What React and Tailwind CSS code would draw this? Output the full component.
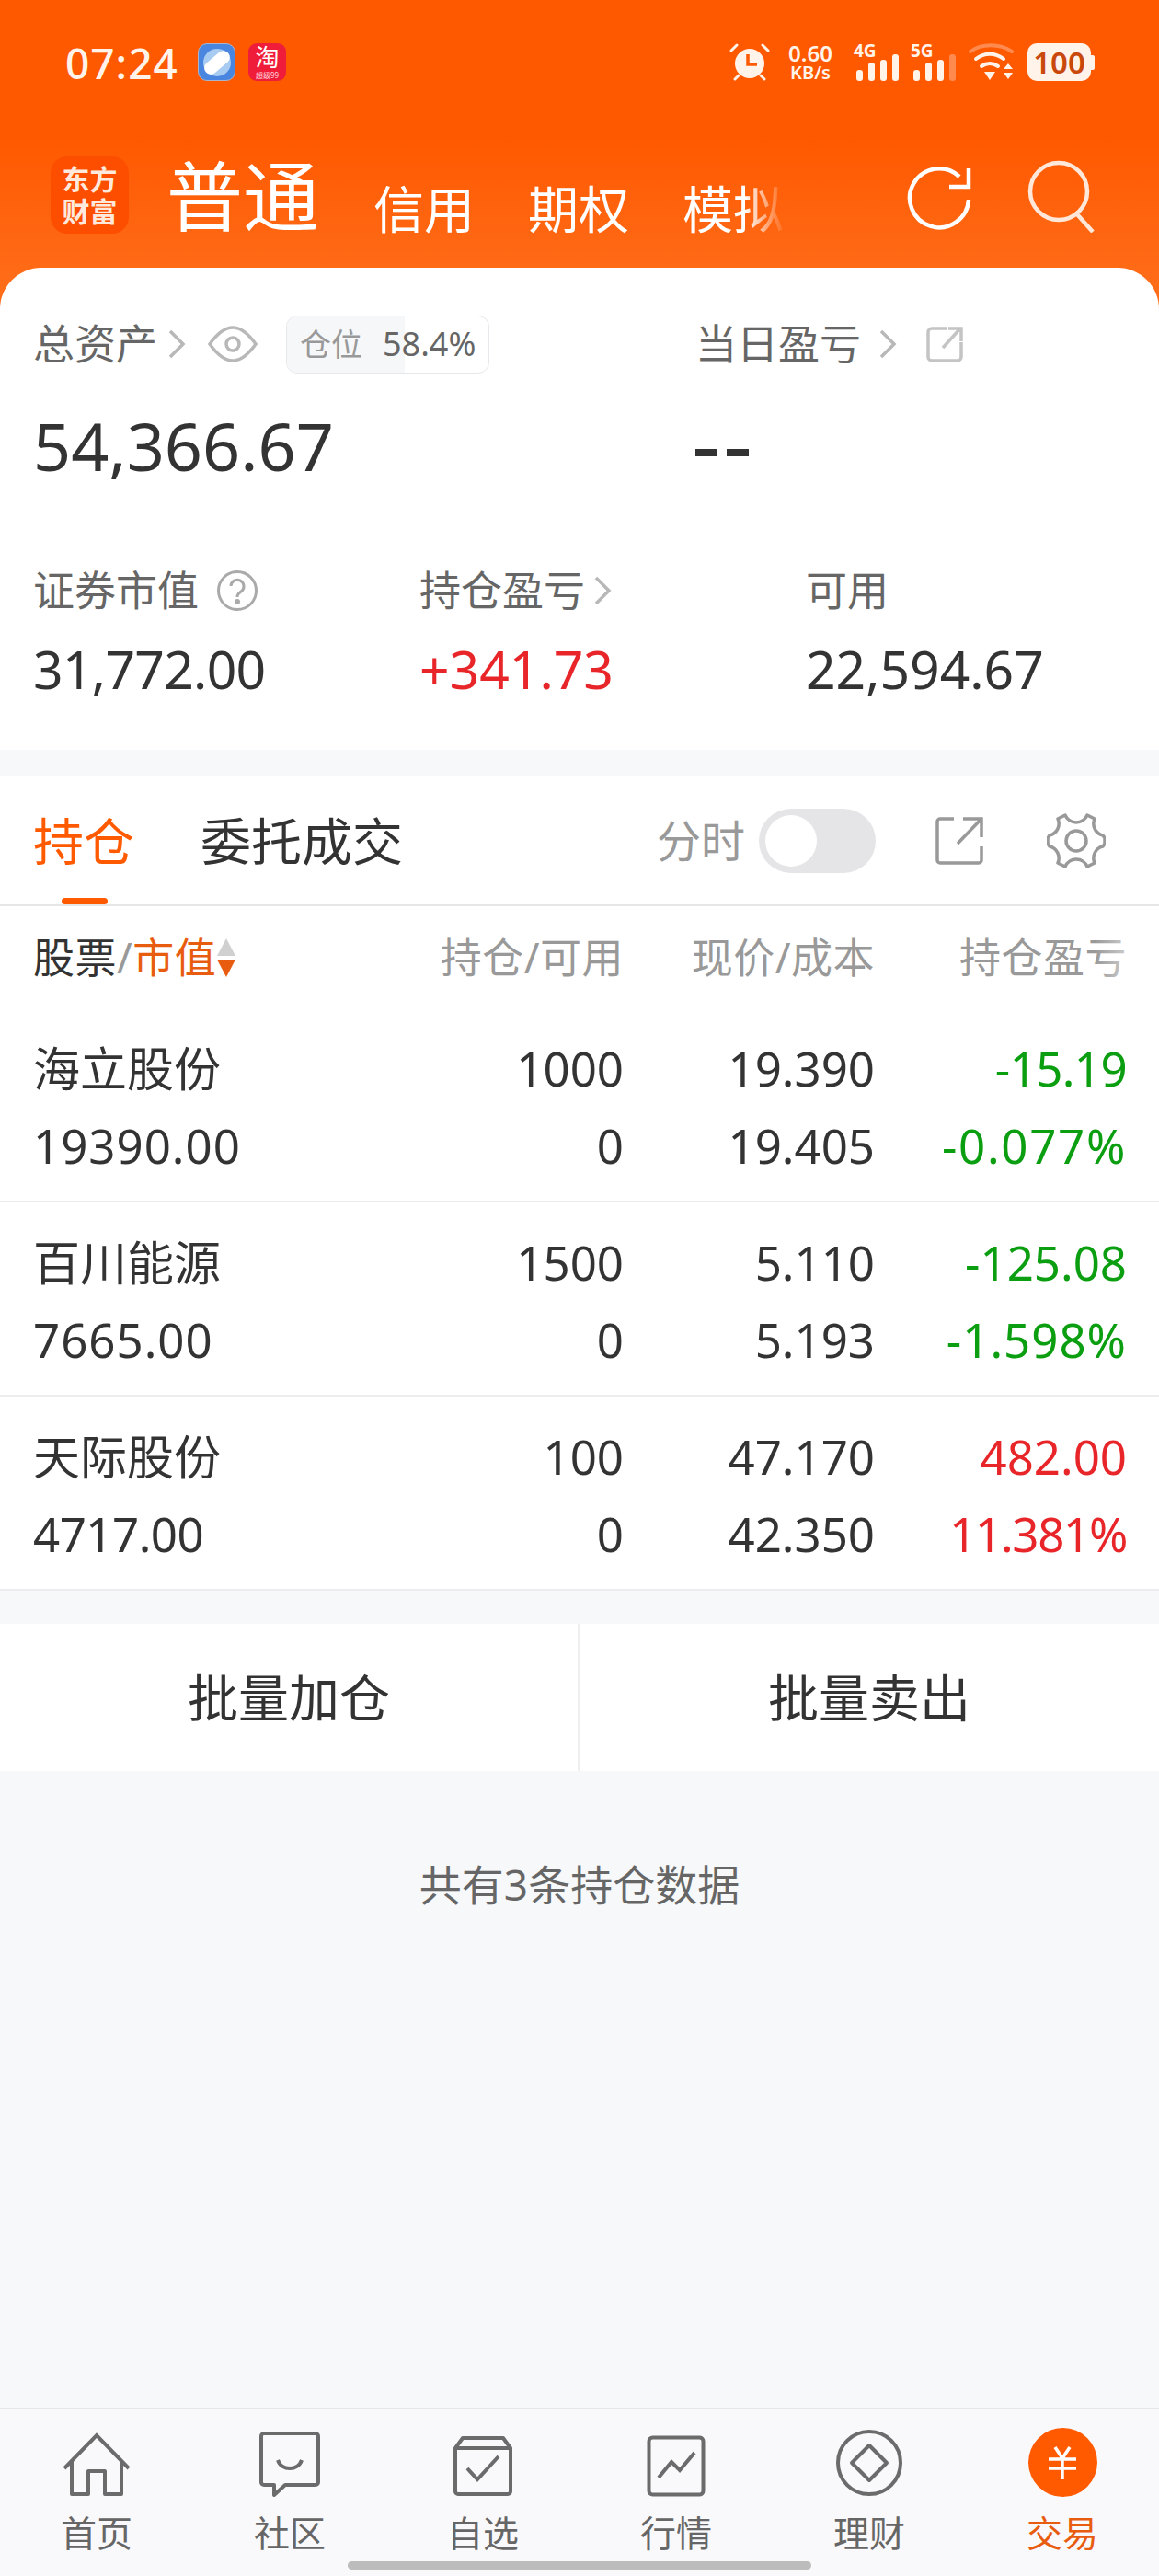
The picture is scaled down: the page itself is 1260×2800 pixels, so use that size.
import React from "react";

const FF = { fontFamily: '"Noto Sans","Noto Sans CJK SC",sans-serif' };

function Bars({ dim }) {
  const hs = ["h-[12px]", "h-[20px]", "h-[23px]", "h-[29px]"];
  return (
    <div className="flex items-end gap-[6px]">
      {hs.map((h, i) => (
        <div key={i} className={`w-[7px] rounded-[3px] ${h} ${dim && i === 3 ? "bg-[#ff8a4f]" : "bg-[#fff3ea]"}`} />
      ))}
    </div>
  );
}

function Alarm() {
  return (
    <svg width="44" height="41" viewBox="0 0 44 41" fill="none">
      <circle cx="22" cy="22" r="16" fill="#fff3ea" />
      <path d="M20 12v11h10" stroke="#ff5a00" strokeWidth="3.5" fill="none" />
      <path d="M2 8l6-6M42 8l-6-6M6 39l4-4M38 39l-4-4" stroke="#fff3ea" strokeWidth="3" strokeLinecap="round" />
    </svg>
  );
}

function Wifi() {
  return (
    <svg width="50" height="41" viewBox="0 0 50 41" fill="none">
      <path d="M2 9C14 0 34 0 47 9" stroke="#ff8a4f" strokeWidth="4" strokeLinecap="round" />
      <path d="M8 17C17 10 29 10 38 17" stroke="#fff3ea" strokeWidth="4" strokeLinecap="round" />
      <path d="M14 25C20 21 26 21 32 25" stroke="#fff3ea" strokeWidth="4" strokeLinecap="round" />
      <path d="M17 31h12l-6 9z" fill="#fff3ea" />
      <path d="M38 28l5-6 5 6zM38 32h10l-5 7z" fill="#fff3ea" />
    </svg>
  );
}

function StatusBar() {
  return (
    <div className="flex h-[41px] items-center justify-between pl-[71px] pr-[70px] text-[#fff3ea]">
      <div className="flex items-center">
        <span className="w-[124px] text-[46px] leading-none font-medium tracking-[1px]">07:24</span>
        <div className="relative ml-[20px] flex h-[41px] w-[41px] items-center justify-center overflow-hidden rounded-[10px] border border-[#a9b4c9] bg-[#4a86e0]">
          <div className="h-[30px] w-[30px] rounded-full bg-[#a8cbf2]" />
          <div className="absolute h-[14px] w-[32px] -rotate-40 rounded-full bg-white" />
        </div>
        <div className="ml-[14px] flex h-[41px] w-[41px] flex-col items-center overflow-hidden rounded-[9px] bg-[#ef1d3a] text-white">
          <span className="h-[30px] text-[26px] leading-[30px]">淘</span>
          <span className="h-[11px] text-[8px] leading-[10px] text-[#ffd6dc]">超级99</span>
        </div>
      </div>
      <div className="flex items-center">
        <Alarm />
        <div className="ml-[17px] flex w-[54px] flex-col items-center font-semibold">
          <span className="text-[24px] leading-[23px]">0.60</span>
          <span className="text-[20px] leading-[20px]">KB/s</span>
        </div>
        <div className="relative ml-[20px] flex h-[41px] w-[49px] items-end justify-end">
          <span className="absolute left-0 top-0 text-[19px] leading-[16px] font-bold">4G</span>
          <Bars />
        </div>
        <div className="relative ml-[13px] flex h-[41px] w-[49px] items-end justify-end">
          <span className="absolute left-0 top-0 text-[19px] leading-[16px] font-bold">5G</span>
          <Bars dim />
        </div>
        <div className="ml-[14px]"><Wifi /></div>
        <div className="ml-[14px] flex items-center">
          <div className="flex h-[41px] w-[69px] items-center justify-center rounded-[10px] bg-[#fff3ea] text-[33px] font-semibold text-[#c9480c]">100</div>
          <div className="h-[16px] w-[4px] rounded-r-[2px] bg-[#fff3ea]" />
        </div>
      </div>
    </div>
  );
}

function Header() {
  return (
    <div className="bg-gradient-to-b from-[#ff5900] from-[45%] to-[#ff6f1a] pb-[72px] pt-[47px]">
      <StatusBar />
      <div className="mt-[74px] flex h-[102px] items-end pl-[55px]">
        <div className="mb-[10px] flex h-[84px] w-[85px] flex-col items-center justify-center rounded-[18px] bg-[#fd4e00] text-[30px] leading-[35px] font-semibold text-[#ffe9dc]">
          <span className="h-[35px]">东方</span>
          <span className="h-[35px]">财富</span>
        </div>
        <span className="mb-[6px] ml-[41px] text-[83px] leading-[90px] text-white">普通</span>
        <div className="mb-[4px] ml-[59px] flex gap-[58px] text-[55px] leading-[66px] text-white [mask-image:linear-gradient(to_right,black_90%,transparent)]">
          <span>信用</span>
          <span>期权</span>
          <span className="w-[112px] whitespace-nowrap">模拟</span>
        </div>
        <div className="mb-[5px] ml-auto mr-[68px] flex items-center gap-[56px] text-white">
          <svg width="78" height="78" viewBox="0 0 78 78" fill="none" stroke="#fff" strokeWidth="4.5">
            <path d="M71 40a32 32 0 1 1-10-25" />
            <path d="M71 6v20H50" strokeLinejoin="miter" />
          </svg>
          <svg className="mb-[6px]" width="76" height="80" viewBox="0 0 76 80" fill="none" stroke="#ffe7d9" strokeWidth="4.5">
            <circle cx="35" cy="35" r="31" />
            <path d="M55 60l17 19" />
          </svg>
        </div>
      </div>
    </div>
  );
}

function Chevron() {
  return (
    <svg width="22" height="36" viewBox="0 0 22 36" fill="none" stroke="#b8b8b8" strokeWidth="3.5">
      <path d="M3 4l14 14L3 32" />
    </svg>
  );
}

function Summary() {
  return (
    <div className="relative z-10 -mt-[45px] rounded-t-[45px] bg-white pb-[46px] pt-[52px]">
      <div className="flex">
        <div className="w-[756px] pl-[36px]">
          <div className="flex h-[62px] items-center">
            <span className="text-[45px] leading-[62px] text-[#666]">总资产</span>
            <span className="ml-[11px]"><Chevron /></span>
            <svg className="ml-[22px]" width="54" height="42" viewBox="0 0 54 42" fill="none" stroke="#b8b8b8" strokeWidth="3.5">
              <path d="M2 21C12 7 20 3 27 3s15 4 25 18C42 35 34 39 27 39S12 35 2 21z" />
              <circle cx="27" cy="21" r="7" />
            </svg>
            <div className="relative ml-[31px] flex h-[63px] w-[221px] items-center overflow-hidden rounded-[12px] border border-[#e6e7ea] bg-white">
              <div className="absolute inset-y-0 left-0 w-[128px] bg-[#f6f7f9]" />
              <span className="relative ml-[14px] whitespace-nowrap text-[34px] text-[#999]">仓位</span>
              <span className="relative ml-[22px] whitespace-nowrap text-[36px] text-[#666]">58.4%</span>
            </div>
          </div>
          <div className="mt-[31px] text-[72px] leading-[96px] text-[#333]">54,366.67</div>
        </div>
        <div>
          <div className="flex h-[62px] items-center">
            <span className="text-[45px] leading-[62px] text-[#666]">当日盈亏</span>
            <span className="ml-[19px]"><Chevron /></span>
            <svg className="ml-[30px]" width="40" height="40" viewBox="0 0 40 40" fill="none" stroke="#c4c4c4" strokeWidth="3.5">
              <path d="M22 3H6a4 4 0 0 0-4 4v27a4 4 0 0 0 4 4h28a4 4 0 0 0 4-4V18" />
              <path d="M18 24L37 3M24 3h14v14" />
            </svg>
          </div>
          <div className="mt-[31px] text-[72px] leading-[96px] font-bold text-[#333]">
            <span className="inline-block h-[8px] w-[24px] bg-[#333] align-middle" />
            <span className="ml-[10px] inline-block h-[8px] w-[24px] bg-[#333] align-middle" />
          </div>
        </div>
      </div>
      <div className="mt-[79px] grid grid-cols-[420px_420px_1fr] pl-[36px]">
        <div>
          <div className="flex h-[62px] items-center">
            <span className="text-[45px] leading-[62px] text-[#666]">证券市值</span>
            <svg className="ml-[19px]" width="46" height="46" viewBox="0 0 46 46" fill="none" stroke="#aaa" strokeWidth="3">
              <circle cx="23" cy="23" r="20.5" />
              <path d="M16 18a7 7 0 1 1 11 6c-3 2-4 3-4 6" />
              <circle cx="23" cy="35" r="1.5" fill="#aaa" />
            </svg>
          </div>
          <div className="mt-[12px] text-[57px] leading-[84px] tracking-[-0.7px] text-[#333]">31,772.00</div>
        </div>
        <div>
          <div className="flex h-[62px] items-center">
            <span className="text-[45px] leading-[62px] text-[#666]">持仓盈亏</span>
            <span className="ml-[9px]"><Chevron /></span>
          </div>
          <div className="mt-[12px] text-[57px] leading-[84px] text-[#e8262a]">+341.73</div>
        </div>
        <div>
          <div className="flex h-[62px] items-center text-[45px] leading-[62px] text-[#666]">可用</div>
          <div className="mt-[12px] text-[57px] leading-[84px] text-[#333]">22,594.67</div>
        </div>
      </div>
    </div>
  );
}

function Tabs() {
  return (
    <div className="relative mt-[29px] flex h-[141px] items-center border-b-[2px] border-[#e6e6e6] bg-white pl-[36px] pr-[58px]">
      <span className="text-[55px] leading-[70px] text-[#ff5a00]">持仓</span>
      <span className="ml-[72px] text-[55px] leading-[70px] text-[#333]">委托成交</span>
      <div className="absolute bottom-0 left-[67px] h-[7px] w-[50px] rounded-full bg-[#ff5a00]" />
      <span className="ml-auto text-[48px] leading-[60px] text-[#999]">分时</span>
      <div className="ml-[15px] flex h-[70px] w-[127px] items-center rounded-full bg-[#e5e5e7] pl-[7px]">
        <div className="h-[56px] w-[56px] rounded-full bg-white" />
      </div>
      <svg className="ml-[65px]" width="52" height="52" viewBox="0 0 52 52" fill="none" stroke="#999" strokeWidth="3.5">
        <path d="M20 2H5a3 3 0 0 0-3 3v42a3 3 0 0 0 3 3h42a3 3 0 0 0 3-3V32" />
        <path d="M30 2h20v20M50 2L24 29" />
      </svg>
      <svg className="ml-[69px]" width="64" height="62" viewBox="0 0 64 62" fill="none" stroke="#999" strokeWidth="3.5" strokeLinejoin="round">
        <path d="M20 3a13 13 0 0 0 24 0l8 4a13 13 0 0 0 9 18l2 3v6l-2 3a13 13 0 0 0-9 18l-8 4a13 13 0 0 0-24 0l-8-4a13 13 0 0 0-9-18l-2-3v-6l2-3a13 13 0 0 0 9-18z" />
        <circle cx="32" cy="31" r="11" />
      </svg>
    </div>
  );
}

const G = "text-[#0a9e10]";
const R = "text-[#e8262a]";
const rows = [
  { n: "海立股份", v: "19390.00", vt: "tracking-[1px]", a: "1000", b: "0", c: "19.390", d: "19.405", e: "-15.19", f: "-0.077%", ft: "tracking-[1.7px]", et: "tracking-[-0.6px]", col: G },
  { n: "百川能源", v: "7665.00", vt: "tracking-[1px]", a: "1500", b: "0", c: "5.110", d: "5.193", e: "-125.08", f: "-1.598%", ft: "tracking-[1px]", et: "tracking-[0px]", col: G },
  { n: "天际股份", v: "4717.00", vt: "tracking-[-0.5px]", a: "100", b: "0", c: "47.170", d: "42.350", e: "482.00", f: "11.381%", ft: "tracking-[-1.3px]", et: "tracking-[0px]", col: R },
];

const GRID = "grid grid-cols-[361px_281px_273px_274px] pl-[36px]";

function Table() {
  return (
    <div className="bg-white">
      <div className={`${GRID} relative h-[111px] items-center text-[45px] leading-[60px] tracking-[0.5px] text-[#999]`}>
        <div className="flex items-center">
          <span className="text-[#333]">股票</span>
          <span>/</span>
          <span className="text-[#e85c10]">市值</span>
          <span className="ml-[1px] flex flex-col gap-[4px]">
            <svg width="20" height="19" viewBox="0 0 20 19"><path d="M10 0l10 19H0z" fill="#d0d0d0" /></svg>
            <svg width="20" height="19" viewBox="0 0 20 19"><path d="M10 19L0 0h20z" fill="#e85c10" /></svg>
          </span>
        </div>
        <div className="text-right">持仓/可用</div>
        <div className="text-right">现价/成本</div>
        <div className="text-right">持仓盈亏</div>
        <div className="absolute inset-y-0 right-0 w-[70px] bg-gradient-to-r from-white/0 to-white" />
      </div>
      {rows.map((r) => (
        <div key={r.n} className={`${GRID} h-[211px] content-center gap-y-[24px] border-b-[2px] border-[#ececee] pt-[5px] text-[51px] leading-[60px] text-[#333]`}>
          <div>{r.n}</div>
          <div className="text-right">{r.a}</div>
          <div className="text-right">{r.c}</div>
          <div className={`text-right ${r.et} ${r.col}`}>{r.e}</div>
          <div className={r.vt}>{r.v}</div>
          <div className="text-right">{r.b}</div>
          <div className="text-right">{r.d}</div>
          <div className={`text-right ${r.ft} ${r.col}`}>{r.f}</div>
        </div>
      ))}
    </div>
  );
}

function Actions() {
  return (
    <div className="mt-[36px] grid h-[160px] grid-cols-2 divide-x-2 divide-[#efefef] bg-white text-[55px] text-[#333]">
      <div className="flex items-center justify-center">批量加仓</div>
      <div className="flex items-center justify-center">批量卖出</div>
    </div>
  );
}

const S = { stroke: "#6b6b6b", strokeWidth: 4, fill: "none" };
const navIcons = [
  <svg width="74" height="70" viewBox="0 0 74 70" {...S}><path d="M2 39L37 3l35 36" /><path d="M10 31v36h18V42h18v25h18V31" strokeLinejoin="round" /></svg>,
  <svg width="66" height="72" viewBox="0 0 66 72" {...S}><path d="M5 3h56a3 3 0 0 1 3 3v50a3 3 0 0 1-3 3H28L16 70V59H5a3 3 0 0 1-3-3V6a3 3 0 0 1 3-3z" strokeLinejoin="round" /><path d="M20 32c4 12 22 12 26 0" /></svg>,
  <svg width="66" height="67" viewBox="0 0 66 67" {...S}><path d="M3 14L11 3h44l8 11v47a3 3 0 0 1-3 3H6a3 3 0 0 1-3-3z" strokeLinejoin="round" /><path d="M3 14h60" /><path d="M16 36l11 12 23-25" /></svg>,
  <svg width="64" height="67" viewBox="0 0 64 67" {...S}><rect x="2.5" y="2.5" width="59" height="62" rx="4" /><path d="M13 46l14-17 9 9 16-19" /></svg>,
  <svg width="74" height="74" viewBox="0 0 74 74" {...S}><circle cx="37" cy="37" r="34" /><path d="M37 18l19 19-19 19-19-19z" strokeLinejoin="round" /></svg>,
  <div className="flex h-[75px] w-[75px] items-center justify-center rounded-full bg-[#ff5a00]">
    <svg width="30" height="36" viewBox="0 0 30 36" fill="none" stroke="#fff" strokeWidth="3.5"><path d="M7 1l8 12 8-12M0 14h30M0 24h30M15 13v23" /></svg>
  </div>,
];
const navLabels = ["首页", "社区", "自选", "行情", "理财", "交易"];

function Nav() {
  return (
    <div className="relative grid h-[183px] grid-cols-6 border-t-[2px] border-[#e6e6e8] bg-[#f9f9fb]">
      {navLabels.map((l, i) => (
        <div key={l} className="flex flex-col items-center">
          <div className="flex h-[95px] items-end justify-center">{navIcons[i]}</div>
          <span className={`mt-[16px] text-[39px] leading-[46px] ${i === 5 ? "text-[#e85c10]" : "text-[#666]"}`}>{l}</span>
        </div>
      ))}
      <div className="absolute bottom-[7px] left-[378px] h-[9px] w-[504px] rounded-full bg-[#bcbcbc]" />
    </div>
  );
}

export default function App() {
  return (
    <div style={FF} className="flex h-[2800px] w-[1260px] flex-col overflow-hidden bg-[#f7f8fa]">
      <Header />
      <Summary />
      <Tabs />
      <Table />
      <Actions />
      <div className="flex flex-1 items-start justify-center pt-[93px] text-[46px] leading-[60px] text-[#666]">共有3条持仓数据</div>
      <Nav />
    </div>
  );
}
